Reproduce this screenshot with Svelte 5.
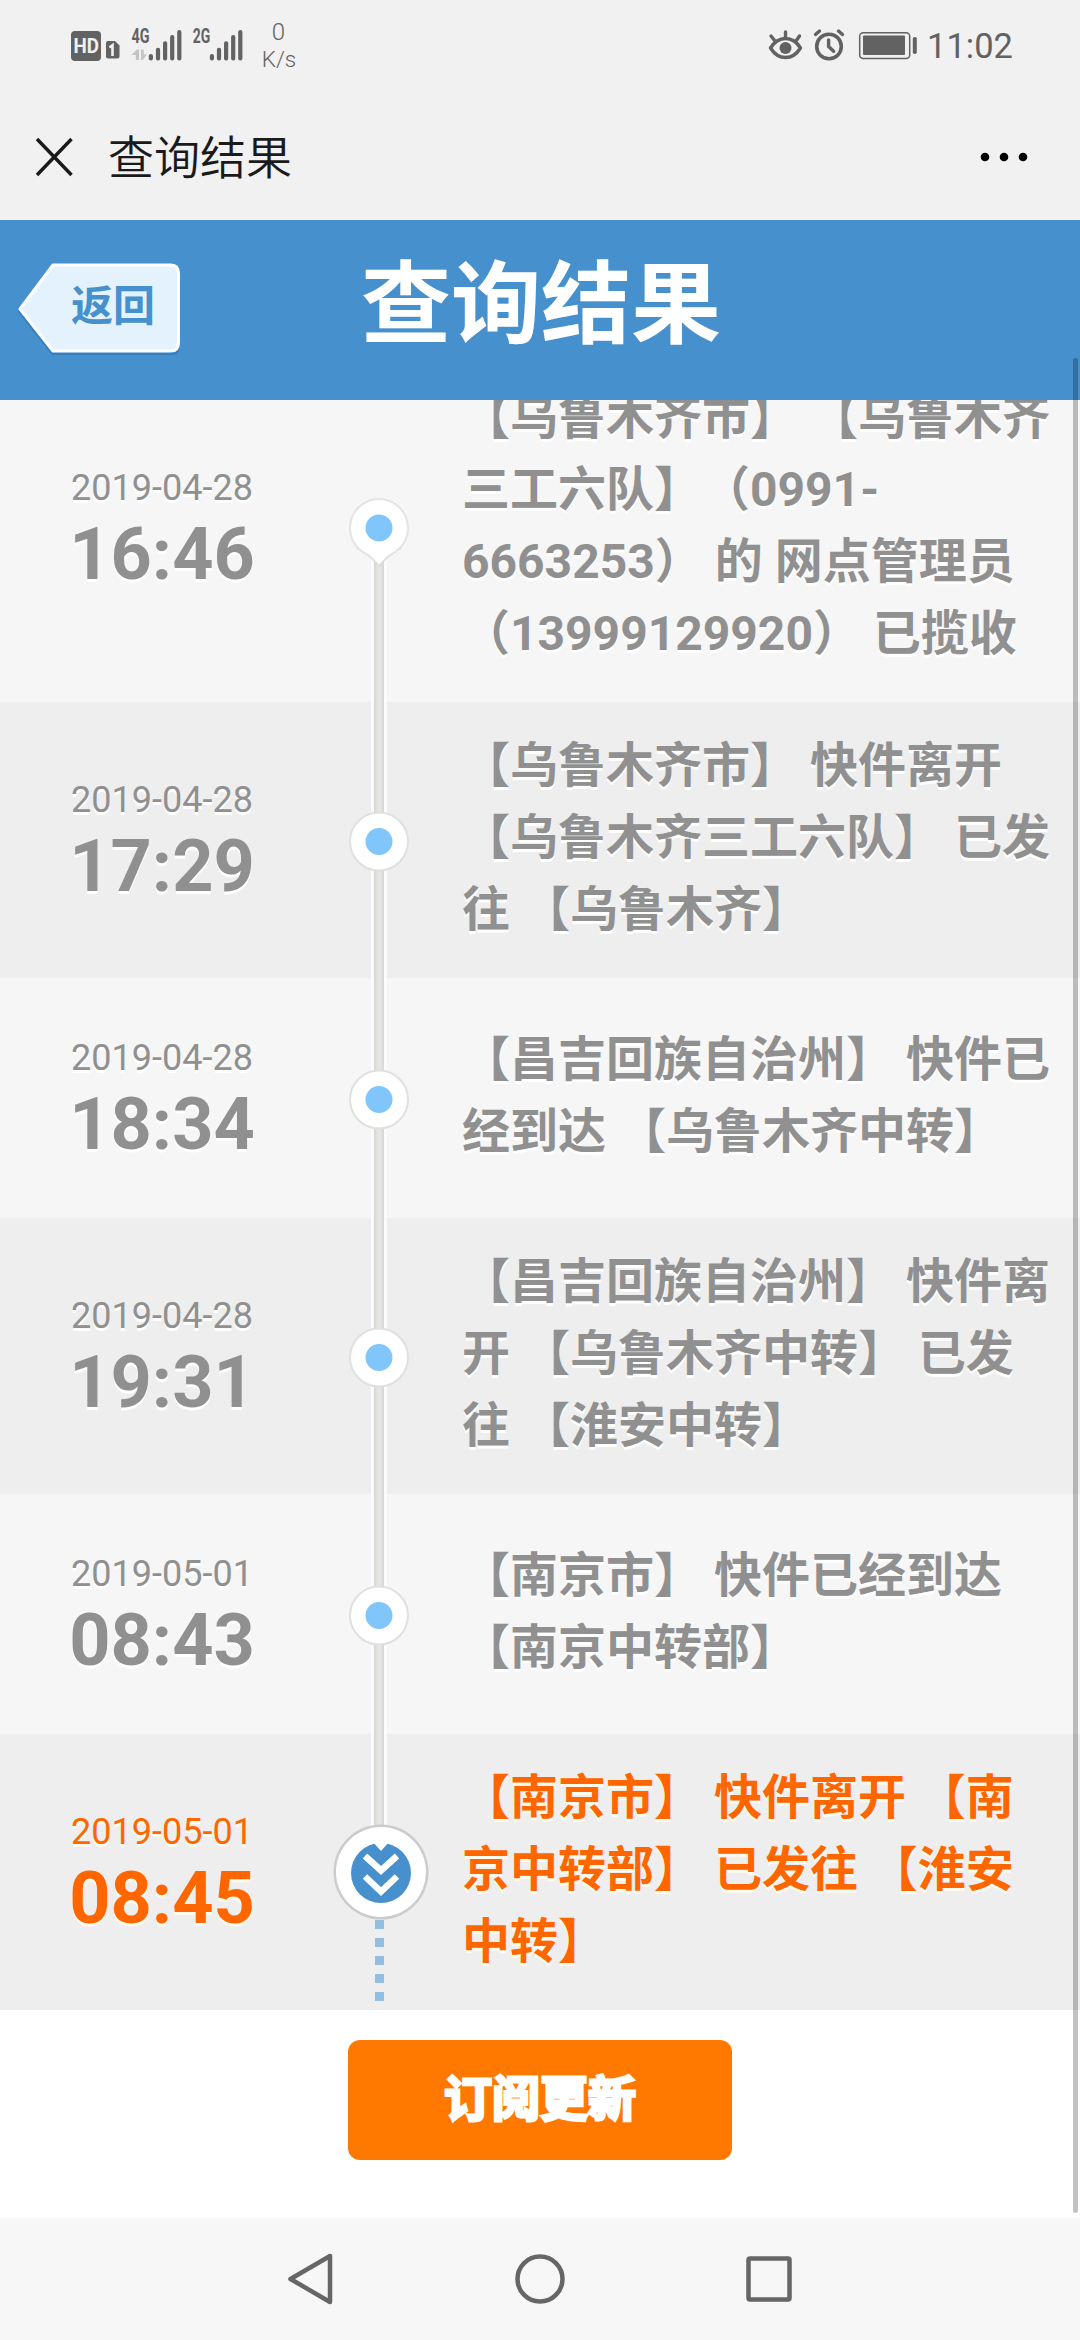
<script>
  const rows = [
    {
      date: '2019-04-28',
      time: '16:46',
      lines: ['【乌鲁木齐市】 【乌鲁木齐', '三工六队】（0991-', '6663253） 的 网点管理员', '（13999129920） 已揽收']
    },
    {
      date: '2019-04-28',
      time: '17:29',
      lines: ['【乌鲁木齐市】 快件离开', '【乌鲁木齐三工六队】 已发', '往 【乌鲁木齐】']
    },
    {
      date: '2019-04-28',
      time: '18:34',
      lines: ['【昌吉回族自治州】 快件已', '经到达 【乌鲁木齐中转】']
    },
    {
      date: '2019-04-28',
      time: '19:31',
      lines: ['【昌吉回族自治州】 快件离', '开 【乌鲁木齐中转】 已发', '往 【淮安中转】']
    },
    {
      date: '2019-05-01',
      time: '08:43',
      lines: ['【南京市】 快件已经到达', '【南京中转部】']
    },
    {
      date: '2019-05-01',
      time: '08:45',
      lines: ['【南京市】 快件离开 【南', '京中转部】 已发往 【淮安', '中转】']
    }
  ];
  const last = rows.length - 1;
  const barTops = [54, 47.7, 41.3, 35, 30];
</script>

<div class="screen">
  <div class="status">
    <svg class="signals" width="240" height="90" viewBox="60 0 240 90">
      <rect x="71" y="31" width="30" height="30" rx="4" fill="#626262" />
      <text x="73.6" y="52.5" font-size="20" font-weight="700" fill="#f1f1f1" textLength="25.5" lengthAdjust="spacingAndGlyphs">HD</text>
      <path d="M108 41h7l4.500 4.500V56.500q0 2-2 2h-9.500q-2 0-2-2V43q0-2 2-2z" fill="#626262" />
      <path d="M109.500 47.500l3-2.300V56" fill="none" stroke="#f1f1f1" stroke-width="2.600" />
      <text x="131.500" y="43" font-size="19.500" font-weight="700" fill="#626262" textLength="18" lengthAdjust="spacingAndGlyphs">4G</text>
      <path d="M131.500 55l5.500-5.500h2V60h-3.200v-5zM147 54.500L142.500 60h-1.500V49.500h2.600v5z" fill="#c4c4c4" />
      <text x="192.800" y="43" font-size="19.500" font-weight="700" fill="#626262" textLength="17.500" lengthAdjust="spacingAndGlyphs">2G</text>
      {#each barTops as top, i}
        <rect x={148.8 + i * 7.1} y={top} width="4.200" height={60.5 - top} rx="2" fill="#626262" />
        <rect x={209.8 + i * 7.1} y={top} width="4.200" height={60.5 - top} rx="2" fill="#626262" />
      {/each}
      <text x="278.500" y="40" font-size="24" fill="#626262" text-anchor="middle" class="thin">0</text>
      <text x="279" y="67" font-size="22.500" fill="#626262" text-anchor="middle" class="thin">K/s</text>
    </svg>
    <div class="status-right">
      <svg width="152" height="90" viewBox="766 0 152 90" fill="none" stroke="#626262">
        <path d="M769.500 48q6-9.500 15-9.500t15 9.500q-6 9.500-15 9.500t-15-9.500z" stroke-width="3.400" stroke-linejoin="round" />
        <circle cx="784.500" cy="48" r="6" fill="#626262" stroke="none" />
        <path d="M784.500 38v-6M774 41l-4-5M795 41l3.500-5" stroke-width="3.400" stroke-linecap="round" />
        <circle cx="828" cy="46.500" r="12.300" stroke-width="3.600" />
        <path d="M827.600 40v6.500l5 4.800" stroke-width="3.400" stroke-linecap="round" />
        <path d="M814.500 34.500l4-3.500M841.500 34.500l-4-3.500" stroke-width="3.400" stroke-linecap="round" />
        <rect x="858.700" y="32.700" width="50" height="25.800" rx="3.500" stroke-width="1.500" />
        <rect x="862" y="35.500" width="42" height="19.500" rx="1" fill="#626262" stroke="none" />
        <rect x="911.800" y="37" width="4" height="17" rx="1.800" fill="#626262" stroke="none" />
      </svg>
      <span class="clock">11:02</span>
    </div>
  </div>

  <div class="appbar">
    <svg width="42" height="42" viewBox="0 0 42 42" fill="none" stroke="#1a1a1a" stroke-width="3.400">
      <path d="M4 3l34.500 36M38.500 3L4 39" />
    </svg>
    <span class="page">查询结果</span>
    <svg class="more" width="50" height="12" viewBox="0 0 50 12">
      <circle cx="6" cy="6" r="4.300" />
      <circle cx="25" cy="6" r="4.300" />
      <circle cx="44" cy="6" r="4.300" />
    </svg>
  </div>

  <header>
    <div class="back">
      <svg width="170" height="96" viewBox="0 0 170 96">
        <path d="M38 5H158Q166 5 166 14V84Q166 93 158 93H38L4 50z" fill="#2f79ba" opacity=".75" />
        <path d="M39 3H157Q164.500 3 164.500 11.500V80.500Q164.500 89 157 89H39L6 47z" fill="#e3f2fd" stroke="#fff" stroke-width="3" stroke-linejoin="round" />
      </svg>
      <span>返回</span>
    </div>
    <h1>查询结果</h1>
  </header>

  <main>
    <div class="list">
      {#each rows as row, i}
        <section class:alt={i % 2 === 1} class:current={i === last}>
          <div class="when">
            <div class="date">{row.date}</div>
            <div class="time">{row.time}</div>
          </div>
          <div class="track">
            <div class="seg upper" class:hidden={i === 0}></div>
            <div class="seg lower" class:dashed={i === last}></div>
            {#if i === last}
              <svg class="node" width="108" height="108" viewBox="-54 -54 108 108">
                <circle cx="2" cy="0" r="47.500" fill="#cbcccc" />
                <circle cx="2" cy="0" r="45" fill="#fff" />
                <circle cx="2" cy="1" r="30" fill="#4690cd" />
                <path d="M-7-31L2-21L11-31z" fill="#fff" />
                <path d="M-14-16L2-1.500L18-16M-14 4.500L2 19.500L18 4.500" fill="none" stroke="#fff" stroke-width="6.500" />
              </svg>
            {:else if i === 0}
              <svg class="node" width="108" height="108" viewBox="-54 -54 108 108">
                <path d="M-20 21Q-8 28 0 38Q8 28 20 21z" fill="#fff" stroke="#dededc" stroke-width="2" />
                <circle r="29" fill="#fff" stroke="#e4e4e3" stroke-width="2" />
                <path d="M-18.500 20Q-7 28 0 36Q7 28 18.500 20z" fill="#fff" />
                <circle r="13.500" fill="#80c6fb" />
              </svg>
            {:else}
              <svg class="node" width="108" height="108" viewBox="-54 -55.500 108 108">
                <circle r="29" fill="#fff" stroke="#e0e0df" stroke-width="2" />
                <circle r="13.500" fill="#80c6fb" />
              </svg>
            {/if}
          </div>
          <div class="desc">
            {#each row.lines as line}
              <div>{line}</div>
            {/each}
          </div>
        </section>
      {/each}
    </div>
    <button>订阅更新</button>
  </main>

  <nav>
    <svg width="52" height="56" viewBox="0 0 52 56"><path d="M45 5V51L5.500 28z" stroke-linejoin="round" /></svg>
    <svg width="52" height="56" viewBox="0 0 52 56"><circle cx="26" cy="28" r="22.500" /></svg>
    <svg width="52" height="56" viewBox="0 0 52 56"><rect x="5.500" y="7.500" width="41" height="41" rx="1.500" /></svg>
  </nav>
  <div class="scrollbar"></div>
</div>

<style>
  :global(body) {
    margin: 0;
    background: #fff;
  }
  .screen {
    position: relative;
    width: 1080px;
    height: 2340px;
    display: flex;
    flex-direction: column;
    overflow: hidden;
    background: #fff;
    font-family: Roboto, 'Noto Sans CJK SC', sans-serif;
    text-spacing-trim: space-all;
  }
  svg {
    display: block;
  }
  .status {
    flex: none;
    height: 90px;
    padding: 0 69px 0 60px;
    display: flex;
    justify-content: space-between;
    background: #f1f1f1;
  }
  .thin {
    font-weight: 300;
  }
  .status-right {
    display: flex;
    gap: 8px;
  }
  .clock {
    width: 84px;
    font-size: 34.5px;
    line-height: 92px;
    color: #626262;
    white-space: nowrap;
  }
  .appbar {
    flex: none;
    height: 130px;
    box-sizing: border-box;
    padding: 4px 51px 0 33px;
    display: flex;
    align-items: center;
    background: #f1f1f1;
  }
  .page {
    margin-left: 33px;
    padding-top: 2px;
    font-size: 46px;
    line-height: 60px;
    font-weight: 350;
    color: #1a1a1a;
  }
  .more {
    margin-left: auto;
  }
  header {
    flex: none;
    height: 180px;
    display: grid;
    grid-template-columns: 200px 1fr 200px;
    align-items: center;
    background: #4690cd;
    z-index: 1;
  }
  .back {
    display: grid;
    margin-left: 14px;
    width: 170px;
    align-items: center;
  }
  .back svg,
  .back span {
    grid-area: 1 / 1;
  }
  .back span {
    padding-left: 57px;
    padding-bottom: 7px;
    font-size: 42px;
    line-height: 60px;
    font-weight: 700;
    color: #4690cd;
  }
  h1 {
    margin: 0;
    padding: 0 0 8px 2px;
    text-align: center;
    font-size: 90px;
    line-height: 120px;
    font-weight: 700;
    color: #fff;
  }
  main {
    flex: none;
    height: 1818px;
    overflow: hidden;
    display: flex;
    flex-direction: column;
    align-items: center;
  }
  .list {
    margin-top: -46px;
    width: 1080px;
  }
  section {
    box-sizing: border-box;
    min-height: 240px;
    display: grid;
    grid-template-columns: 324px 110px 1fr;
    background: #f6f6f6;
    color: #909090;
    text-shadow: 0 3px 0 #fff;
  }
  .alt {
    background: #eee;
  }
  .current {
    color: #ff6600;
    text-shadow: 0 3px 0 #fffbee;
  }
  .when {
    align-self: center;
    text-align: center;
  }
  .date {
    font-size: 36px;
    line-height: 53px;
  }
  .time {
    font-size: 72px;
    line-height: 79px;
    font-weight: 700;
  }
  .track {
    display: grid;
    grid-template-columns: 110px;
    grid-template-rows: 1fr 1fr;
    justify-items: center;
  }
  .seg {
    width: 10px;
    border: solid #fbfbfb;
    border-width: 0 3px;
    background: linear-gradient(90deg, #d5d5d3, #e5e5e1 35%, #e5e5e1 65%, #d5d5d3);
  }
  .upper {
    grid-area: 1 / 1;
  }
  .lower {
    grid-area: 2 / 1;
  }
  .hidden {
    visibility: hidden;
  }
  .dashed {
    width: 9px;
    border: 0;
    background: repeating-linear-gradient(180deg, #92bfe1 0 3px, transparent 3px 12px, #92bfe1 12px 18px);
  }
  .node {
    grid-area: 1 / 1 / 3 / 2;
    align-self: center;
    z-index: 1;
  }
  .desc {
    align-self: center;
    padding: 28px 0 32px 28px;
    font-size: 48px;
    line-height: 72px;
    font-weight: 700;
    white-space: nowrap;
  }
  button {
    flex: none;
    margin-top: 30px;
    width: 384px;
    height: 120px;
    border: 0;
    border-radius: 12px;
    padding: 0 0 10px;
    background: #ff7800;
    color: #fff;
    font-family: inherit;
    font-size: 48px;
    font-weight: 700;
    -webkit-text-stroke: 3px #fff;
  }
  nav {
    flex: none;
    height: 122px;
    display: flex;
    justify-content: center;
    align-items: center;
    gap: 177px;
    background: #f7f7f7;
  }
  nav svg {
    fill: none;
    stroke: #666;
    stroke-width: 4.5px;
  }
  .scrollbar {
    position: absolute;
    z-index: 2;
    right: 2px;
    top: 358px;
    width: 5px;
    height: 1855px;
    border-radius: 3px;
    background: rgba(0, 0, 0, 0.24);
  }
</style>
